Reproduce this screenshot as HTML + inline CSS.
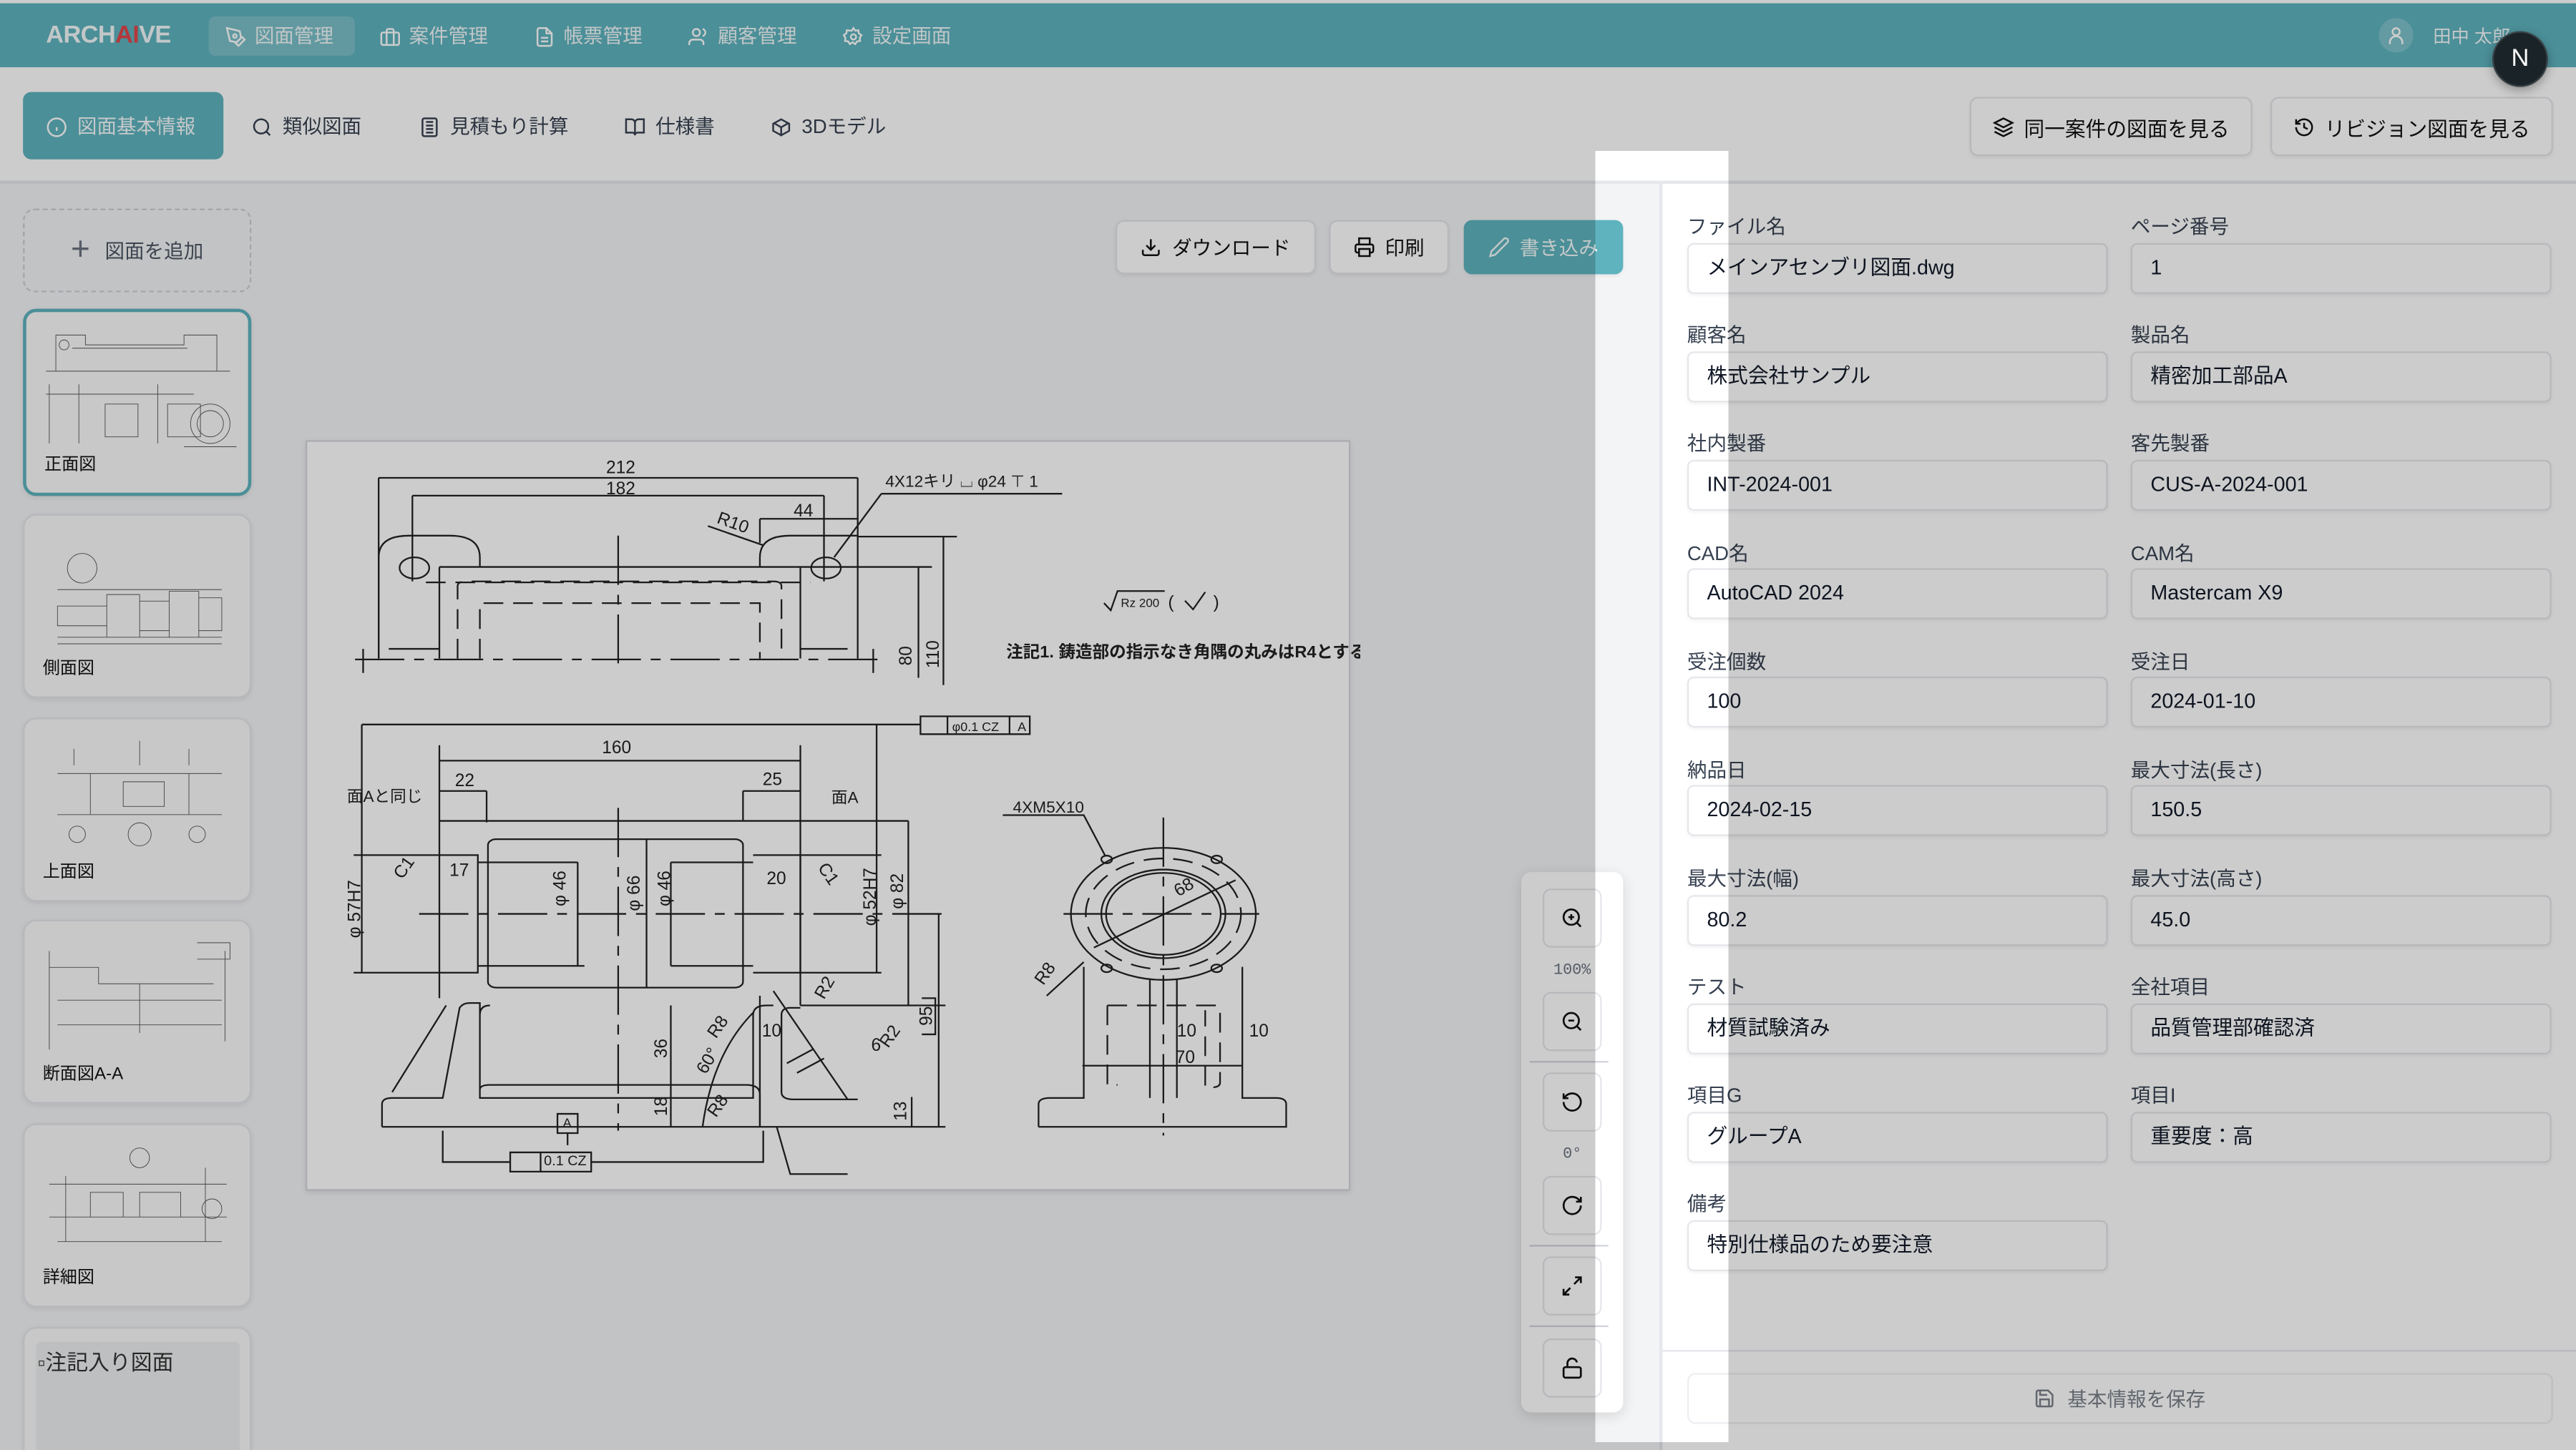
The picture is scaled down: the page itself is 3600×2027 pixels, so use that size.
<!DOCTYPE html>
<html><head><meta charset="utf-8">
<style>
html,body{margin:0;padding:0;width:3600px;height:2026px;overflow:hidden;background:#fff}
#s{position:absolute;left:0;top:0;width:1568px;height:883px;transform:scale(2.29592);transform-origin:0 0;font-family:"Liberation Sans","Noto Sans CJK JP",sans-serif;color:#111827;overflow:hidden;background:#fff}
.a{position:absolute}
.hdr{left:0;top:2px;width:1568px;height:39px;background:#5eb3be}
.nav{top:11px;height:22px;line-height:22px;font-size:12px;color:#f0f8f9;display:flex;align-items:center;gap:5px}
.nav svg{width:13px;height:13px}
.tb{top:41px;left:0;width:1568px;height:71px;background:#fff;border-bottom:2px solid #e5e7eb;box-sizing:border-box}
.tab{top:56px;height:41px;font-size:12px;color:#374151;display:flex;align-items:center;gap:6px;line-height:41px}
.tab svg{width:13px;height:13px}
.btn{border:1px solid #e5e7eb;border-radius:5px;background:#fff;box-sizing:border-box;font-size:12px;color:#111;display:flex;align-items:center;justify-content:center;gap:6px;box-shadow:0 1px 2px rgba(0,0,0,.06)}
.btn svg{width:13px;height:13px}
.lbl{font-size:12px;color:#374151}
.inp{height:31px;border:1px solid #e5e7eb;border-radius:4px;box-sizing:border-box;font-size:12.5px;line-height:29px;padding-left:11px;background:#fff;width:256px;box-shadow:0 1px 2px rgba(0,0,0,.05)}
.card{left:14px;width:139px;height:112px;border-radius:8px;background:#fafafa;border:1px solid #e5e7eb;box-sizing:border-box;box-shadow:0 1px 3px rgba(0,0,0,.08)}
.card span{position:absolute;left:11px;bottom:10px;font-size:10.5px;color:#111}
.zb{left:939px;width:36px;height:36px;border:1px solid #e5e7eb;border-radius:5px;box-sizing:border-box;background:#fff;display:flex;align-items:center;justify-content:center}
.zb svg{width:14px;height:14px}
.zt{left:926px;width:62px;text-align:center;font-family:"Liberation Mono",monospace;font-size:9.5px;color:#6b7280}
.zs{left:931px;width:48px;height:1px;background:#d1d5db}
svg.dw text{font-family:"Liberation Sans","Noto Sans CJK JP",sans-serif;fill:#222}
svg.dw g.sh *{vector-effect:non-scaling-stroke}
</style></head><body><div id="s">
<div class="a" style="left:0;top:0;width:1568px;height:2px;background:#fff"></div>
<div class="a hdr"></div>
<div class="a" style="left:28px;top:13px;font-size:15px;font-weight:bold;color:#f3f9fa;letter-spacing:-0.3px">ARCH<span style="color:#e0464a">AI</span>VE</div>
<div class="a" style="left:127px;top:10px;width:89px;height:24px;border-radius:4px;background:rgba(255,255,255,.18)"></div>
<div class="a nav" style="left:137px"><svg viewBox="0 0 24 24" fill="none" stroke="#fff" stroke-width="2"><path d="M12 19l7-7 3 3-7 7-3-3z"/><path d="M18 13l-1.5-7.5L2 2l3.5 14.5L13 18l5-5z"/><circle cx="11" cy="11" r="2"/></svg>図面管理</div>
<div class="a nav" style="left:231px"><svg viewBox="0 0 24 24" fill="none" stroke="#fff" stroke-width="2"><rect x="2" y="7" width="20" height="14" rx="2"/><path d="M16 21V5a2 2 0 0 0-2-2h-4a2 2 0 0 0-2 2v16"/></svg>案件管理</div>
<div class="a nav" style="left:325px"><svg viewBox="0 0 24 24" fill="none" stroke="#fff" stroke-width="2"><path d="M14 2H6a2 2 0 0 0-2 2v16a2 2 0 0 0 2 2h12a2 2 0 0 0 2-2V8z"/><path d="M14 2v6h6M16 13H8M16 17H8"/></svg>帳票管理</div>
<div class="a nav" style="left:419px"><svg viewBox="0 0 24 24" fill="none" stroke="#fff" stroke-width="2"><circle cx="9" cy="7" r="4"/><path d="M17 21v-2a4 4 0 0 0-4-4H5a4 4 0 0 0-4 4v2M16 3.1a4 4 0 0 1 0 7.8"/></svg>顧客管理</div>
<div class="a nav" style="left:513px"><svg viewBox="0 0 24 24" fill="none" stroke="#fff" stroke-width="2"><circle cx="12" cy="12" r="3"/><path d="M12 2l2 3 3.5-.5.5 3.5 3 2-2 3 .5 3.5-3.5.5-2 3-3-2-3 2-2-3-3.5-.5.5-3.5-2-3 3-2 .5-3.5L10 5z"/></svg>設定画面</div>
<div class="a" style="left:1448px;top:11px;width:21px;height:21px;border-radius:50%;background:rgba(255,255,255,.2)"></div>
<svg class="a" style="left:1452px;top:15px" width="13" height="13" viewBox="0 0 24 24" fill="none" stroke="#fff" stroke-width="2"><circle cx="12" cy="8" r="4"/><path d="M5 22v-2a6 6 0 0 1 14 0v2"/></svg>
<div class="a" style="left:1481px;top:14px;font-size:11px;color:#f3f9fa">田中 太郎</div>

<div class="a tb"></div>
<div class="a" style="left:14px;top:56px;width:122px;height:41px;border-radius:5px;background:#5eb3be"></div>
<div class="a tab" style="left:28px;color:#f5fbfc;top:57px"><svg viewBox="0 0 24 24" fill="none" stroke="#fff" stroke-width="2"><circle cx="12" cy="12" r="10"/><path d="M12 16v-4M12 8h.01"/></svg>図面基本情報</div>
<div class="a tab" style="left:153px;top:57px"><svg viewBox="0 0 24 24" fill="none" stroke="#374151" stroke-width="2"><circle cx="11" cy="11" r="8"/><path d="M21 21l-4.3-4.3"/></svg>類似図面</div>
<div class="a tab" style="left:255px;top:57px"><svg viewBox="0 0 24 24" fill="none" stroke="#374151" stroke-width="2"><rect x="4" y="2" width="16" height="20" rx="2"/><path d="M8 6h8M8 10h8M8 14h8M8 18h8"/></svg>見積もり計算</div>
<div class="a tab" style="left:380px;top:57px"><svg viewBox="0 0 24 24" fill="none" stroke="#374151" stroke-width="2"><path d="M2 3h6a4 4 0 0 1 4 4v14a3 3 0 0 0-3-3H2zM22 3h-6a4 4 0 0 0-4 4v14a3 3 0 0 1 3-3h7z"/></svg>仕様書</div>
<div class="a tab" style="left:469px;top:57px"><svg viewBox="0 0 24 24" fill="none" stroke="#374151" stroke-width="2"><path d="M21 16V8l-9-5-9 5v8l9 5 9-5z"/><path d="M3.3 7L12 12l8.7-5M12 22V12"/></svg>3Dモデル</div>
<div class="a btn" style="left:1199px;top:59px;width:172px;height:36px;font-size:12.5px"><svg viewBox="0 0 24 24" fill="none" stroke="#111" stroke-width="2"><path d="M12 2L2 7l10 5 10-5-10-5zM2 17l10 5 10-5M2 12l10 5 10-5"/></svg>同一案件の図面を見る</div>
<div class="a btn" style="left:1382px;top:59px;width:172px;height:36px;font-size:12.5px"><svg viewBox="0 0 24 24" fill="none" stroke="#111" stroke-width="2"><path d="M3 12a9 9 0 1 0 9-9 9.75 9.75 0 0 0-6.74 2.74L3 8"/><path d="M3 3v5h5M12 7v5l4 2"/></svg>リビジョン図面を見る</div>

<div class="a" style="left:0;top:112px;width:166px;height:771px;background:#f3f4f6"></div>
<div class="a" style="left:14px;top:127px;width:139px;height:51px;border:1.5px dashed #cbd0d6;border-radius:7px;box-sizing:border-box;display:flex;align-items:center;justify-content:center;gap:9px;font-size:12px;color:#4b5563"><span style="font-size:20px;color:#6b7280;font-weight:300">+</span>図面を追加</div>
<div class="a card" style="top:188px;height:114px;border:2px solid #5eb3be">
<svg class="a" style="left:10px;top:8px" width="118" height="75" viewBox="0 0 118 75" fill="none" stroke="#555" stroke-width=".4"><path d="M8 28V6h18v6h60v-6h20v22M2 28h112M18 14h70M2 42h90M4 36v36M22 36v36M70 36v36M38 48h20v20H38zM76 48h20v20H76z"/><circle cx="13" cy="12" r="3"/><circle cx="102" cy="60" r="12"/><circle cx="102" cy="60" r="8"/><path d="M86 74h32"/></svg><span>正面図</span></div>
<div class="a card" style="top:313px"><svg class="a" style="left:10px;top:10px" width="118" height="72" viewBox="0 0 118 72" fill="none" stroke="#555" stroke-width=".4"><circle cx="25" cy="22" r="9"/><path d="M10 35h100M10 45h30v12H10zM40 38h20v26H40zM60 42h18v18H60zM78 36h18v28H78zM96 40h14v20H96zM10 64h100M10 68h100"/></svg><span>側面図</span></div>
<div class="a card" style="top:437px"><svg class="a" style="left:10px;top:8px" width="118" height="72" viewBox="0 0 118 72" fill="none" stroke="#555" stroke-width=".4"><path d="M20 10v10M60 5v15M90 10v10M10 25h100M30 25v25h60V25M50 30h25v15H50zM10 50h100"/><circle cx="22" cy="62" r="5"/><circle cx="60" cy="62" r="7"/><circle cx="95" cy="62" r="5"/></svg><span>上面図</span></div>
<div class="a card" style="top:560px"><svg class="a" style="left:10px;top:8px" width="118" height="72" viewBox="0 0 118 72" fill="none" stroke="#555" stroke-width=".4"><path d="M5 20h30v10h70M10 40h100M10 55h100M5 10v60M112 10v55M60 30v30M95 5h20v10H95"/></svg><span>断面図A-A</span></div>
<div class="a card" style="top:684px"><svg class="a" style="left:10px;top:6px" width="118" height="72" viewBox="0 0 118 72" fill="none" stroke="#555" stroke-width=".4"><circle cx="60" cy="14" r="6"/><path d="M5 30h108M5 50h108M15 25v40M100 20v45M30 35h20v15H30zM60 35h25v15H60zM10 65h100"/><circle cx="104" cy="45" r="6"/></svg><span>詳細図</span></div>
<div class="a card" style="top:808px;height:90px"><div class="a" style="left:7px;top:8px;width:124px;height:80px;background:#eeeff1;border-radius:3px"></div><div class="a" style="left:8px;top:10px;font-size:13px;color:#333">▫注記入り図面</div></div>

<div class="a" style="left:166px;top:112px;width:845px;height:771px;background:#f3f4f6"></div>
<div class="a" style="left:1010px;top:112px;width:2px;height:771px;background:#e5e7eb"></div>
<div class="a btn" style="left:679px;top:134px;width:122px;height:33px"><svg viewBox="0 0 24 24" fill="none" stroke="#111" stroke-width="2"><path d="M21 15v4a2 2 0 0 1-2 2H5a2 2 0 0 1-2-2v-4M7 10l5 5 5-5M12 15V3"/></svg>ダウンロード</div>
<div class="a btn" style="left:809px;top:134px;width:73px;height:33px"><svg viewBox="0 0 24 24" fill="none" stroke="#111" stroke-width="2"><path d="M6 9V2h12v7M6 18H4a2 2 0 0 1-2-2v-5a2 2 0 0 1 2-2h16a2 2 0 0 1 2 2v5a2 2 0 0 1-2 2h-2"/><rect x="6" y="14" width="12" height="8"/></svg>印刷</div>
<div class="a btn" style="left:891px;top:134px;width:97px;height:33px;background:#5eb3be;border-color:#5eb3be;color:#f2fafb"><svg viewBox="0 0 24 24" fill="none" stroke="#f2fafb" stroke-width="2"><path d="M17 3a2.85 2.85 0 1 1 4 4L7.5 20.5 2 22l1.5-5.5z"/></svg>書き込み</div>

<div class="a" style="left:186px;top:268px;width:636px;height:457px;background:#fff;border:1px solid #d6d8dc;box-sizing:border-box;box-shadow:0 1px 3px rgba(0,0,0,.1)"></div>
<svg class="a dw" style="left:183px;top:266px" width="644.5" height="460" viewBox="0 0 1568 1120" fill="none" stroke="#222" stroke-width="1">
<g class="sh" transform="scale(1,0.7143)">
<path d="M115 85H825M165 122H775M115 85V460M825 85V460M165 122V300M775 122V300M680 170H825M680 170V220"/>
<path d="M115 460V250Q115 205 160 205H220Q265 205 265 250V270H680V250Q680 205 725 205H825M205 270V460M740 270V460M740 270H680M205 270H265"/>
<circle cx="168" cy="272" r="22"/><circle cx="778" cy="272" r="22"/>
<path d="M185 302H755M232 460V310Q232 300 245 300H700Q712 300 712 310V460M265 460V345H680V460" stroke-dasharray="12 6"/>
<path d="M80 462H860" stroke-dasharray="30 6 6 6"/>
<path d="M470 205V470" stroke-dasharray="30 6 6 6"/>
<path d="M92 440V490M848 440V490M740 270H935M825 207H972M915 270V500M952 207V515M130 440H205M740 440H810"/>
<path d="M603 185L685 225M860 118H1128M860 118L790 250"/>
<path d="M90 597H918V617H1080V580H918V597M958 580V617M1050 580V617M90 597V1112M205 640V1165M740 640V1180M205 672H740M205 735H275M275 735V800M655 735H740M655 735V797M205 797H900M78 868H205M740 868H860M853 597V1112M205 1112H78M740 1112H860"/>
<rect x="277" y="835" width="378" height="308" rx="12"/>
<path d="M205 868H262V1112H205M670 868H740V1112H670M262 883H410M548 883H670M410 883V1098M548 883V1098M512 835V1143M262 1098H420M548 1098H670M900 797V1180M740 1180H955"/>
<path d="M175 990H955M470 770V1440" stroke-dasharray="30 6 6 6"/>
<path d="M120 1432V1385Q120 1372 135 1372H210L235 1185Q240 1175 250 1175H265V1372H670V1200Q670 1180 690 1180H700M265 1355Q265 1345 280 1345H660Q680 1345 680 1365V1432M712 1200Q712 1185 725 1185H740M712 1200V1360Q712 1375 730 1375H825M120 1432H955M135 1360L215 1180M280 1180Q265 1180 265 1200V1372"/>
<path d="M680 1432V1160M700 1150L810 1375M945 990V1432M905 1370V1432M210 1440V1505H310V1485H430V1505H685V1440M310 1485H430V1525H310zM355 1485V1525M380 1405H410V1445H380zM395 1445V1470M548 1180V1432M920 1165H940V1240H920"/>
<path d="M595 1432Q610 1280 670 1195M720 1300L760 1270M735 1320L775 1290M705 1432L725 1530H810"/>
<circle cx="1278" cy="990" r="137"/><circle cx="1278" cy="990" r="115" stroke-dasharray="12 6"/><circle cx="1278" cy="990" r="92"/><circle cx="1278" cy="990" r="85"/>
<circle cx="1194" cy="877" r="8"/><circle cx="1357" cy="877" r="8"/><circle cx="1194" cy="1103" r="8"/><circle cx="1357" cy="1103" r="8"/>
<path d="M1130 990H1420M1278 790V1450" stroke-dasharray="30 6 6 6"/>
<path d="M1093 1432V1385Q1093 1372 1110 1372H1160V1100M1395 1100V1372H1445Q1460 1372 1460 1385V1432H1093M1258 1127V1372M1298 1127V1372M1158 1305H1395M1175 1060L1385 920M1040 785H1160L1192 870M1105 1160L1160 1090"/>
<path d="M1195 1180H1355Q1362 1180 1362 1190V1340Q1362 1350 1350 1350H1340V1190M1195 1180V1345H1210" stroke-dasharray="12 6"/>
<path d="M1190 345L1200 360L1210 320H1280M1310 340L1322 358L1340 322"/>
</g>
<g fill="#222" stroke="none" font-size="26">
<text x="452" y="54">212</text><text x="452" y="85">182</text><text x="730" y="118">44</text>
<text x="615" y="127" transform="rotate(20 615 127)">R10</text>
<text x="866" y="74" font-size="24">4X12キリ ⌴ φ24 ⊤ 1</text>
<text x="905" y="339" transform="rotate(-90 905 339)">80</text><text x="945" y="343" transform="rotate(-90 945 343)">110</text>
<text x="1215" y="252" font-size="18">Rz 200</text><text x="1285" y="254" font-size="26">(</text><text x="1352" y="254" font-size="26">)</text>
<text x="1045" y="327" font-size="25" font-weight="bold">注記1. 鋳造部の指示なき角隅の丸みはR4とする</text>
<text x="446" y="469">160</text><text x="228" y="518">22</text><text x="684" y="516">25</text><text x="220" y="651">17</text><text x="690" y="663">20</text>
<text x="68" y="541" font-size="24">面Aと同じ</text><text x="786" y="543" font-size="24">面A</text>
<text x="965" y="436" font-size="19">φ0.1 CZ</text><text x="1062" y="436" font-size="19">A</text>
<text x="392" y="696" transform="rotate(-90 392 696)">φ 46</text><text x="502" y="703" transform="rotate(-90 502 703)">φ 66</text><text x="547" y="696" transform="rotate(-90 547 696)">φ 46</text>
<text x="88" y="743" transform="rotate(-90 88 743)">φ 57H7</text><text x="852" y="725" transform="rotate(-90 852 725)">φ 52H7</text><text x="892" y="700" transform="rotate(-90 892 700)">φ 82</text>
<text x="542" y="921" transform="rotate(-90 542 921)">36</text><text x="542" y="1007" transform="rotate(-90 542 1007)">18</text><text x="897" y="1014" transform="rotate(-90 897 1014)">13</text><text x="935" y="873" transform="rotate(-90 935 873)">95</text>
<text x="683" y="889">10</text><text x="845" y="910">6</text><text x="615" y="893" transform="rotate(-55 615 893)">R8</text><text x="615" y="1010" transform="rotate(-55 615 1010)">R8</text>
<text x="600" y="946" transform="rotate(-60 600 946)">60°</text><text x="775" y="835" transform="rotate(-60 775 835)">R2</text><text x="870" y="907" transform="rotate(-55 870 907)">R2</text>
<text x="150" y="657" transform="rotate(-55 150 657)">C1</text><text x="765" y="639" transform="rotate(55 765 639)">C1</text>
<text x="1055" y="557" font-size="24">4XM5X10</text><text x="1300" y="682" transform="rotate(-30 1300 682)">68</text><text x="1100" y="814" transform="rotate(-55 1100 814)">R8</text>
<text x="1298" y="889">10</text><text x="1405" y="889">10</text><text x="1296" y="928">70</text>
<text x="360" y="1080" font-size="21">0.1 CZ</text><text x="388" y="1023" font-size="19">A</text>
</g>
</svg>

<div class="a" style="left:926px;top:531px;width:62px;height:329px;background:#fff;border-radius:6px;box-shadow:0 2px 8px rgba(0,0,0,.12)"></div>
<div class="a zb" style="top:541px"><svg viewBox="0 0 24 24" fill="none" stroke="#111" stroke-width="2"><circle cx="11" cy="11" r="8"/><path d="M21 21l-4.3-4.3M11 8v6M8 11h6"/></svg></div>
<div class="a zt" style="top:585px">100%</div>
<div class="a zb" style="top:604px"><svg viewBox="0 0 24 24" fill="none" stroke="#111" stroke-width="2"><circle cx="11" cy="11" r="8"/><path d="M21 21l-4.3-4.3M8 11h6"/></svg></div>
<div class="a zs" style="top:646px"></div>
<div class="a zb" style="top:653px"><svg viewBox="0 0 24 24" fill="none" stroke="#111" stroke-width="2"><path d="M3 12a9 9 0 1 0 9-9 9.75 9.75 0 0 0-6.74 2.74L3 8"/><path d="M3 3v5h5"/></svg></div>
<div class="a zt" style="top:697px">0°</div>
<div class="a zb" style="top:716px"><svg viewBox="0 0 24 24" fill="none" stroke="#111" stroke-width="2"><path d="M21 12a9 9 0 1 1-9-9c2.52 0 4.930 1 6.74 2.74L21 8"/><path d="M21 3v5h-5"/></svg></div>
<div class="a zs" style="top:758px"></div>
<div class="a zb" style="top:765px"><svg viewBox="0 0 24 24" fill="none" stroke="#111" stroke-width="2"><path d="M15 3h6v6M9 21H3v-6M21 3l-7 7M3 21l7-7"/></svg></div>
<div class="a zs" style="top:807px"></div>
<div class="a zb" style="top:815px"><svg viewBox="0 0 24 24" fill="none" stroke="#111" stroke-width="2"><rect x="3" y="11" width="18" height="11" rx="2"/><path d="M7 11V7a5 5 0 0 1 9.9-1"/></svg></div>

<div class="a" style="left:1012px;top:112px;width:556px;height:771px;background:#fff"></div>
<div class="a lbl" style="left:1027px;top:129px">ファイル名</div><div class="a inp" style="left:1027px;top:148px">メインアセンブリ図面.dwg</div>
<div class="a lbl" style="left:1297px;top:129px">ページ番号</div><div class="a inp" style="left:1297px;top:148px">1</div>
<div class="a lbl" style="left:1027px;top:195px">顧客名</div><div class="a inp" style="left:1027px;top:214px">株式会社サンプル</div>
<div class="a lbl" style="left:1297px;top:195px">製品名</div><div class="a inp" style="left:1297px;top:214px">精密加工部品A</div>
<div class="a lbl" style="left:1027px;top:261px">社内製番</div><div class="a inp" style="left:1027px;top:280px">INT-2024-001</div>
<div class="a lbl" style="left:1297px;top:261px">客先製番</div><div class="a inp" style="left:1297px;top:280px">CUS-A-2024-001</div>
<div class="a lbl" style="left:1027px;top:328px">CAD名</div><div class="a inp" style="left:1027px;top:346px">AutoCAD 2024</div>
<div class="a lbl" style="left:1297px;top:328px">CAM名</div><div class="a inp" style="left:1297px;top:346px">Mastercam X9</div>
<div class="a lbl" style="left:1027px;top:394px">受注個数</div><div class="a inp" style="left:1027px;top:412px">100</div>
<div class="a lbl" style="left:1297px;top:394px">受注日</div><div class="a inp" style="left:1297px;top:412px">2024-01-10</div>
<div class="a lbl" style="left:1027px;top:460px">納品日</div><div class="a inp" style="left:1027px;top:478px">2024-02-15</div>
<div class="a lbl" style="left:1297px;top:460px">最大寸法(長さ)</div><div class="a inp" style="left:1297px;top:478px">150.5</div>
<div class="a lbl" style="left:1027px;top:526px">最大寸法(幅)</div><div class="a inp" style="left:1027px;top:545px">80.2</div>
<div class="a lbl" style="left:1297px;top:526px">最大寸法(高さ)</div><div class="a inp" style="left:1297px;top:545px">45.0</div>
<div class="a lbl" style="left:1027px;top:592px">テスト</div><div class="a inp" style="left:1027px;top:611px">材質試験済み</div>
<div class="a lbl" style="left:1297px;top:592px">全社項目</div><div class="a inp" style="left:1297px;top:611px">品質管理部確認済</div>
<div class="a lbl" style="left:1027px;top:658px">項目G</div><div class="a inp" style="left:1027px;top:677px">グループA</div>
<div class="a lbl" style="left:1297px;top:658px">項目I</div><div class="a inp" style="left:1297px;top:677px">重要度：高</div>
<div class="a lbl" style="left:1027px;top:724px">備考</div><div class="a inp" style="left:1027px;top:743px">特別仕様品のため要注意</div>
<div class="a" style="left:1012px;top:822px;width:556px;height:1px;background:#e5e7eb"></div>
<div class="a" style="left:1027px;top:836px;width:527px;height:31px;border:1px solid #eceef1;border-radius:5px;box-sizing:border-box;display:flex;align-items:center;justify-content:center;gap:7px;font-size:12px;color:#7b818a"><svg width="13" height="13" viewBox="0 0 24 24" fill="none" stroke="#7b818a" stroke-width="2"><path d="M19 21H5a2 2 0 0 1-2-2V5a2 2 0 0 1 2-2h11l5 5v11a2 2 0 0 1-2 2z"/><path d="M17 21v-8H7v8M7 3v5h8"/></svg>基本情報を保存</div>

<div class="a" style="left:971px;top:92px;width:81px;height:786px;box-shadow:0 0 0 3000px rgba(0,0,0,.2)"></div>
<div class="a" style="left:1517px;top:19px;width:34px;height:34px;border-radius:50%;background:#1a2327;border:1px solid #3a4448;box-sizing:border-box;color:#fff;font-size:15px;text-align:center;line-height:32px;box-shadow:0 2px 6px rgba(0,0,0,.3)">N</div>
</div></body></html>
